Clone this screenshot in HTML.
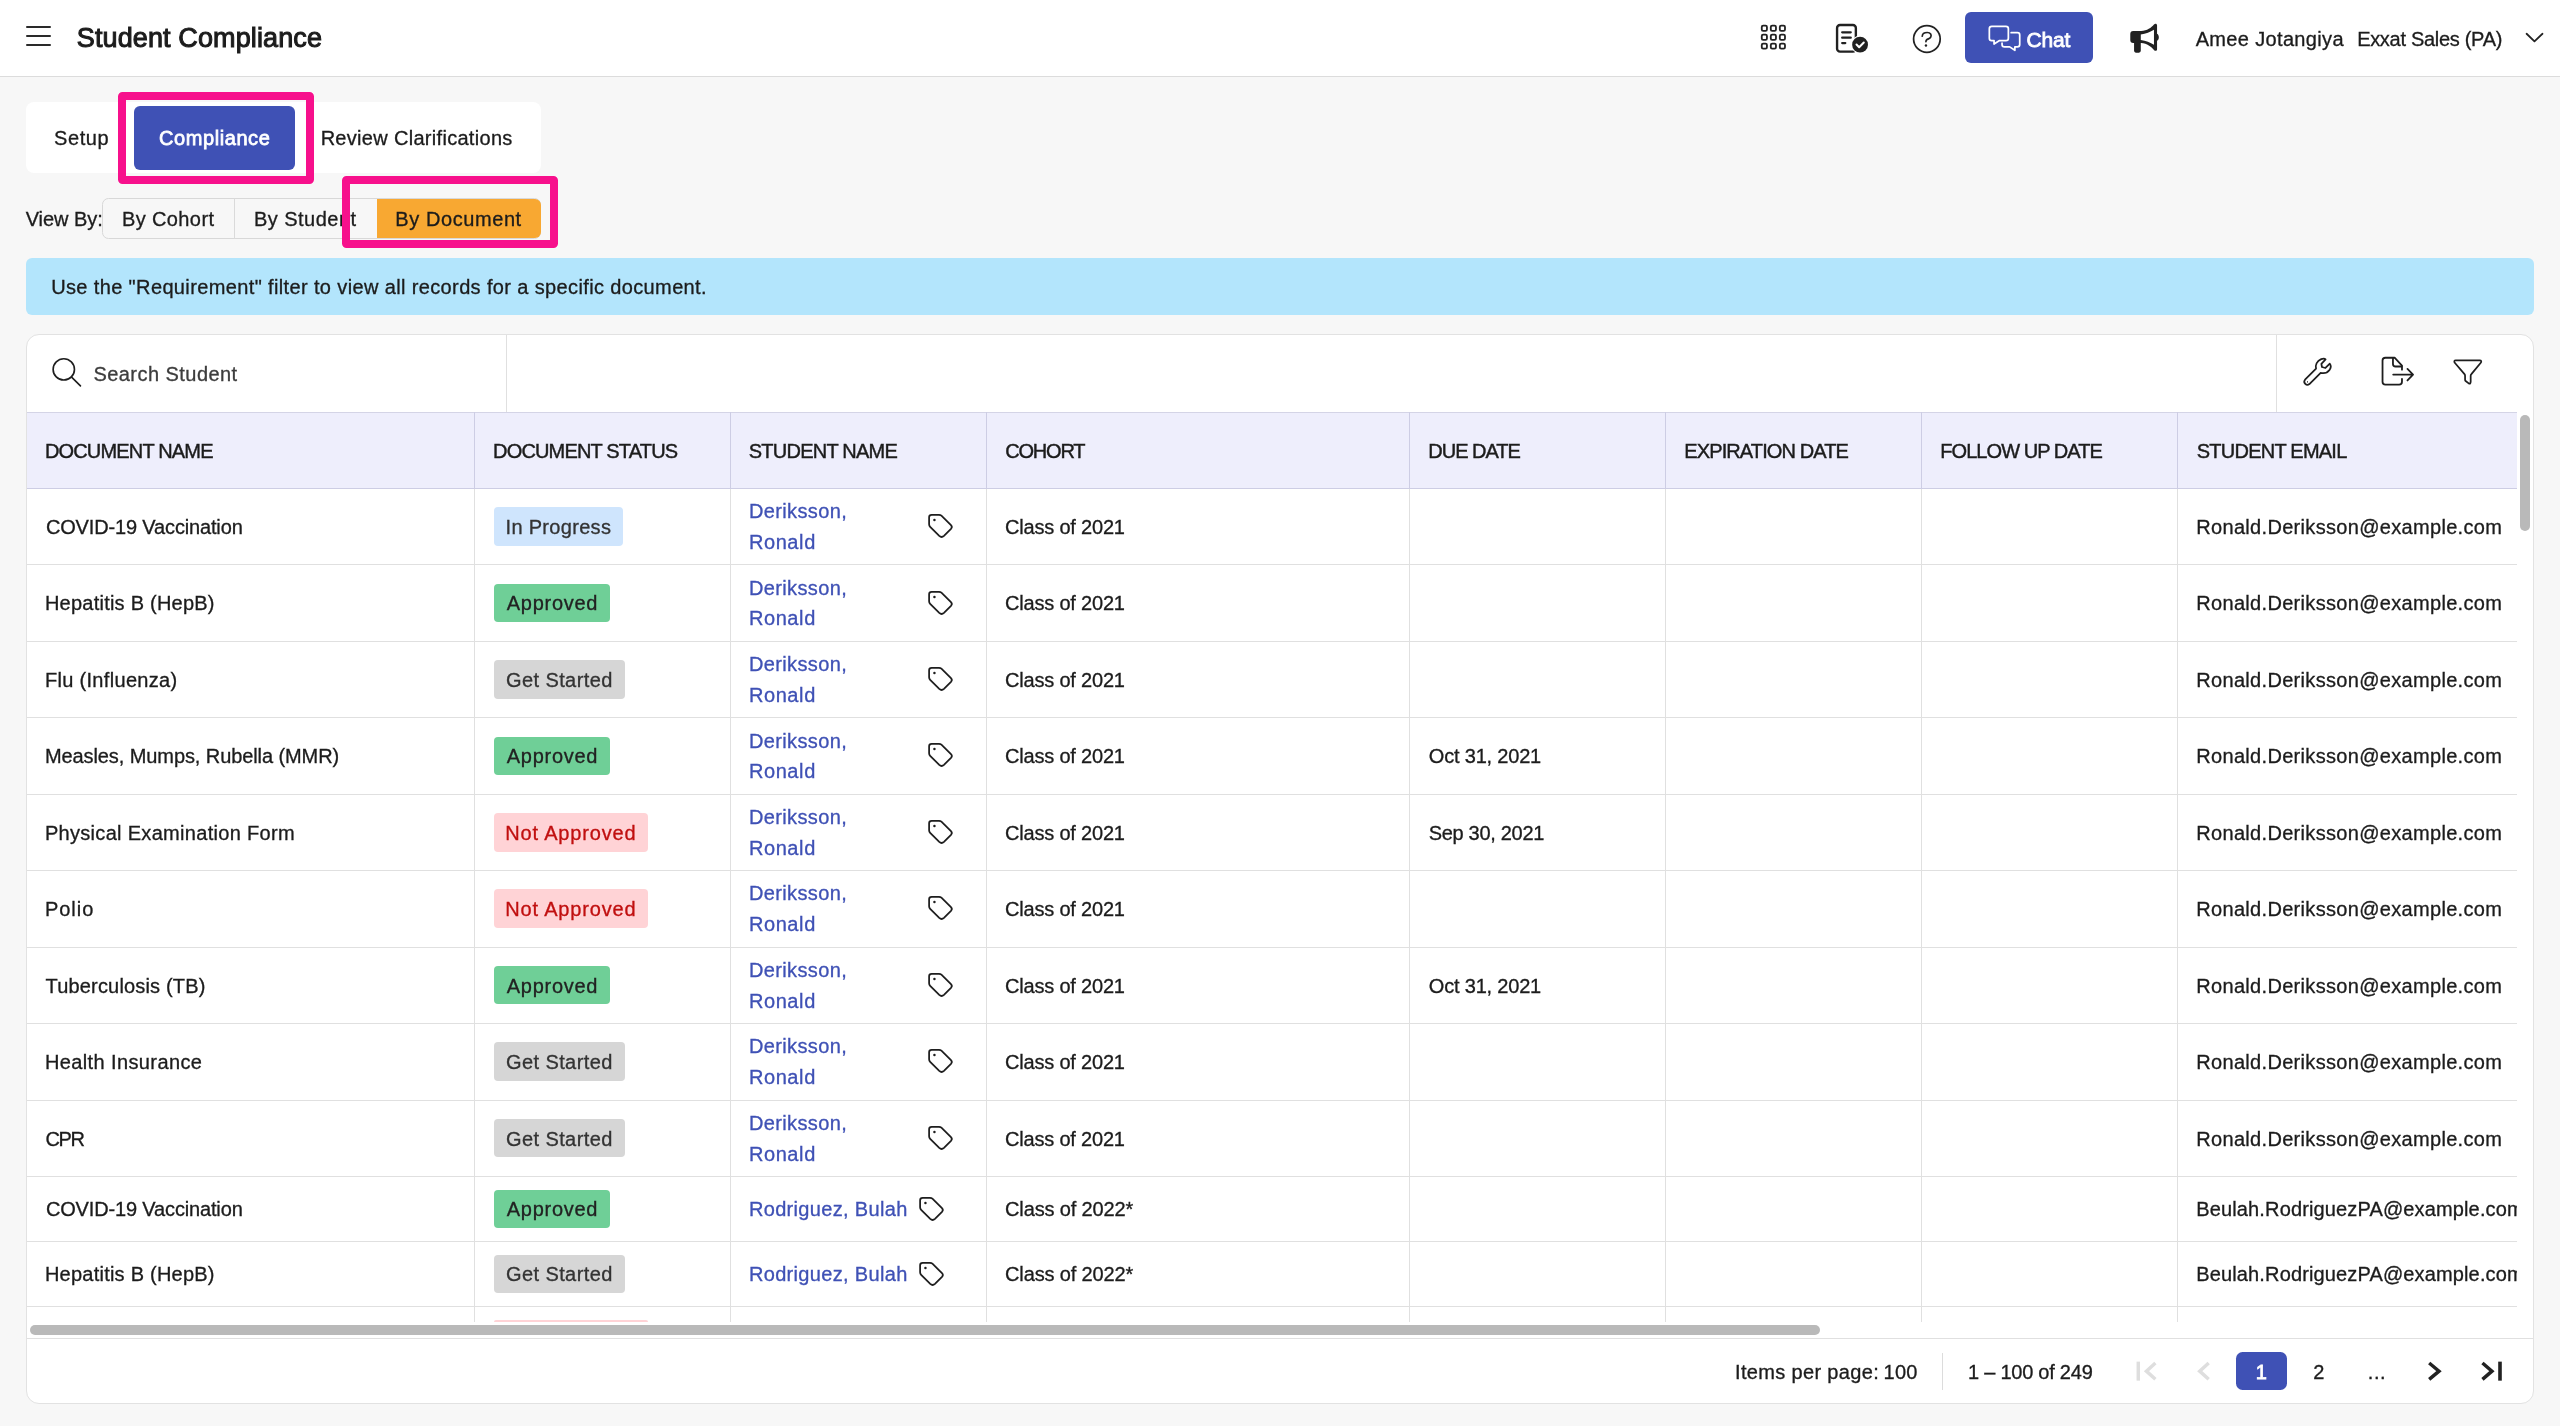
<!DOCTYPE html>
<html lang="en">
<head>
<meta charset="utf-8">
<title>Student Compliance</title>
<style>
html,body{margin:0;padding:0}
body{width:2560px;height:1426px;position:relative;overflow:hidden;background:#f7f7f7;font-family:"Liberation Sans",sans-serif;color:#212121}
.a{position:absolute;box-sizing:border-box}
.t{position:absolute;white-space:nowrap;line-height:1;display:block}
svg{position:absolute;overflow:visible}
.tag{fill:none;stroke:#1e1e1e}
.vl{position:absolute;width:1px;background:#e0e0e0;top:489px;height:833px}
.vh{position:absolute;width:1px;background:#cdcde4;top:412px;height:77px}
.hl{position:absolute;height:1px;background:#e0e0e0;left:27px;width:2490px}
</style>
</head>
<body>

<!-- ===== top header ===== -->
<div class="a" style="left:0;top:0;width:2560px;height:77px;background:#fff;border-bottom:1px solid #dcdcdc"></div>
<div class="a" style="left:26px;top:25.8px;width:24.6px;height:1.9px;background:#2a2a2a;border-radius:1px"></div>
<div class="a" style="left:26px;top:35.4px;width:24.6px;height:1.9px;background:#2a2a2a;border-radius:1px"></div>
<div class="a" style="left:26px;top:44.1px;width:24.6px;height:1.9px;background:#2a2a2a;border-radius:1px"></div>

<!-- grid / doc-check / help icons -->
<svg style="left:1750px;top:10px" width="210" height="60" viewBox="0 0 2560 731" fill="none" stroke="#222">
 <g stroke-width="22">
  <rect x="143.500" y="190.500" width="63" height="63" rx="17"/><rect x="253.500" y="190.500" width="63" height="63" rx="17"/><rect x="363.500" y="190.500" width="63" height="63" rx="17"/>
  <rect x="143.500" y="300.500" width="63" height="63" rx="17"/><rect x="253.500" y="300.500" width="63" height="63" rx="17"/><rect x="363.500" y="300.500" width="63" height="63" rx="17"/>
  <rect x="143.500" y="408.500" width="63" height="63" rx="17"/><rect x="253.500" y="408.500" width="63" height="63" rx="17"/><rect x="363.500" y="408.500" width="63" height="63" rx="17"/>
 </g>
</svg>

<!-- doc-check -->
<svg style="left:1830px;top:18px" width="44" height="40" viewBox="0 0 1569 1426" fill="none" stroke="#212121">
 <rect x="252" y="248" width="670" height="950" rx="105" stroke-width="85"/>
 <path d="M435 512H740M435 700H740M435 893H545" stroke-width="82" stroke-linecap="round"/>
 <circle cx="1072" cy="950" r="325" fill="#fff" stroke="none"/>
 <circle cx="1072" cy="950" r="282" fill="#212121" stroke="none"/>
 <path d="M945 945L1040 1040L1205 872" stroke="#fff" stroke-width="72" stroke-linecap="round" stroke-linejoin="round"/>
</svg>
<!-- help -->
<svg style="left:1906px;top:18px" width="44" height="40" viewBox="0 0 1569 1426" fill="none" stroke="#222" stroke-linecap="round">
 <circle cx="745" cy="748" r="474" stroke-width="62"/>
 <path d="M580 648C585 545 660 518 760 518C880 518 915 600 885 670C860 725 790 745 740 775C715 795 712 815 710 842" stroke-width="60"/>
 <circle cx="712" cy="980" r="43" fill="#222" stroke="none"/>
</svg>
<!-- chat button -->
<div class="a" style="left:1965px;top:11.8px;width:128px;height:51.3px;background:#3f51b5;border-radius:6px"></div>
<!-- chat bubbles -->
<svg style="left:1982px;top:18px" width="44" height="40" viewBox="0 0 1569 1426" fill="none" stroke="#fff" stroke-width="62" stroke-linejoin="round" stroke-linecap="round">
 <path d="M347 300H855Q940 300 940 385V720Q940 805 855 805H625L430 930V805H347Q262 805 262 720V385Q262 300 347 300Z"/>
 <path d="M1040 525H1262Q1345 525 1345 608V947Q1345 1030 1262 1030H1172V1152L985 1030H800Q715 1030 715 945V900"/>
</svg>
<!-- megaphone -->
<svg style="left:2122px;top:18px" width="44" height="40" viewBox="0 0 1569 1426">
 <path fill="#212121" fill-rule="evenodd" d="M400 465L680 465C900 455 1040 350 1140 235C1180 185 1250 200 1250 260L1250 560C1335 600 1335 780 1250 815L1250 1115C1250 1175 1180 1190 1140 1140C1040 1025 900 910 680 895L670 895L670 1170Q670 1235 605 1235L495 1235Q430 1235 430 1170L430 890L400 890Q295 890 295 785L295 570Q295 465 400 465ZM670 585C850 570 1010 500 1140 420L1140 955C1010 875 850 805 670 785Z"/>
</svg>
<!-- chevron down -->
<svg style="left:2180px;top:10px" width="380" height="60" viewBox="0 0 2560 404"><path d="M2335 160L2388 211L2442 160" fill="none" stroke="#222" stroke-width="12" stroke-linecap="round" stroke-linejoin="round"/></svg>

<!-- ===== tabs ===== -->
<div class="a" style="left:26px;top:101.9px;width:514.6px;height:71px;background:#fff;border-radius:8px"></div>
<div class="a" style="left:133.9px;top:106.1px;width:161.2px;height:64px;background:#3f51b5;border-radius:6px"></div>
<div class="a" style="left:118px;top:91.9px;width:196px;height:92.2px;border:8px solid #f7108c;border-radius:4.5px"></div>

<!-- ===== view by ===== -->
<div class="a" style="left:101.6px;top:198px;width:439.4px;height:40.5px;border:1px solid #d8d8d8;border-radius:6.5px"></div>
<div class="a" style="left:234px;top:198px;width:1px;height:40.5px;background:#dadada"></div>
<div class="a" style="left:377px;top:199px;width:164px;height:39px;background:#f8a832;border-radius:0 6px 6px 0"></div>

<!-- ===== banner ===== -->
<div class="a" style="left:26px;top:258px;width:2508px;height:56.7px;background:#b3e5fc;border-radius:6px"></div>

<!-- ===== card ===== -->
<div class="a" style="left:26px;top:334px;width:2508px;height:1069.5px;background:#fff;border:1px solid #e2e2e2;border-radius:13px"></div>
<div class="a" style="left:506px;top:335px;width:1px;height:77px;background:#e0e0e0"></div>
<div class="a" style="left:2276px;top:335px;width:1px;height:77px;background:#e0e0e0"></div>
<!-- search icon -->
<svg style="left:40px;top:345px" width="210" height="55" viewBox="0 0 2560 670" fill="none" stroke="#1e1e1e" stroke-width="20"><circle cx="290" cy="297" r="130"/><path d="M385 392L493 499" stroke-linecap="round"/></svg>
<!-- toolbar icons -->
<svg style="left:2290px;top:345px" width="210" height="55" viewBox="0 0 2560 670" fill="none" stroke="#1e1e1e" stroke-width="22" stroke-linejoin="round" stroke-linecap="round">
 <path d="M1365 300V250L1275 155H1163Q1128 155 1128 190V447Q1128 482 1163 482H1330Q1365 482 1365 447V412"/>
 <path d="M1255 160V232Q1255 262 1287 262H1360"/>
 <path d="M1258 360H1498M1432 292L1500 360L1432 432"/>
</svg>

<!-- wrench -->
<svg style="left:2296px;top:352px" width="44" height="40" viewBox="0 0 1569 1426" fill="none" stroke="#1e1e1e" stroke-width="63" stroke-linejoin="round" stroke-linecap="round">
 <path d="M715 590C690 480 730 330 900 255C960 230 1020 228 1055 262L905 420L925 535L1050 570L1205 418C1290 520 1200 800 880 745L478 1143A111 111 0 0 1 322 987Z"/>
 <ellipse cx="410" cy="1065" rx="17" ry="30" fill="#1e1e1e" stroke="none"/>
</svg>
<!-- filter -->
<svg style="left:2446px;top:352px" width="44" height="40" viewBox="0 0 1569 1426" fill="none" stroke="#1e1e1e" stroke-width="62" stroke-linejoin="round">
 <path d="M350 295L1200 295Q1290 300 1240 385L905 790Q880 815 880 850L880 1065Q880 1150 810 1120L700 1035Q680 1020 680 990L680 850Q680 815 660 790L312 385Q265 300 350 295Z"/>
</svg>
<!-- table header -->
<div class="a" style="left:27px;top:412px;width:2490px;height:77px;background:#eeeefc;border-top:1px solid #d4d4e6;border-bottom:1px solid #cdcde4"></div>
<div class="vh" style="left:474px"></div><div class="vh" style="left:730px"></div><div class="vh" style="left:986px"></div><div class="vh" style="left:1409px"></div><div class="vh" style="left:1665px"></div><div class="vh" style="left:1921px"></div><div class="vh" style="left:2177px"></div>
<!-- body grid lines -->
<div class="vl" style="left:474px"></div><div class="vl" style="left:730px"></div><div class="vl" style="left:986px"></div><div class="vl" style="left:1409px"></div><div class="vl" style="left:1665px"></div><div class="vl" style="left:1921px"></div><div class="vl" style="left:2177px"></div>
<div class="hl" style="top:564px"></div><div class="hl" style="top:641px"></div><div class="hl" style="top:717px"></div><div class="hl" style="top:794px"></div><div class="hl" style="top:870px"></div><div class="hl" style="top:947px"></div><div class="hl" style="top:1023px"></div><div class="hl" style="top:1100px"></div><div class="hl" style="top:1176px"></div><div class="hl" style="top:1241px"></div><div class="hl" style="top:1306px"></div>
<!-- partial last row badge -->
<div class="a" style="left:494px;top:1320px;width:153.7px;height:2px;background:#ffd3d6;border-radius:4px 4px 0 0"></div>

<div class="a" style="left:2236.2px;top:1352px;width:50.8px;height:37.8px;background:#3f51b5;border-radius:6.5px"></div>
<div style="position:absolute;left:494px;top:507.08px;width:129.2px;height:38.6px;background:#cfe5fd;border-radius:4px"></div>
<svg class="tag" style="left:900px;top:500.03px" width="100" height="50" viewBox="0 0 2560 1280"><path d="M745 440Q745 378 810 378L1000 378Q1035 378 1060 402L1305 645Q1350 690 1305 738L1125 918Q1065 975 1005 918L772 685Q745 658 745 620Z" stroke-width="45" stroke-linejoin="round"/><circle cx="882" cy="510" r="32" fill="#1e1e1e" stroke="none"/></svg>
<div style="position:absolute;left:494px;top:583.55px;width:116px;height:38.6px;background:#6fcf97;border-radius:4px"></div>
<svg class="tag" style="left:900px;top:576.50px" width="100" height="50" viewBox="0 0 2560 1280"><path d="M745 440Q745 378 810 378L1000 378Q1035 378 1060 402L1305 645Q1350 690 1305 738L1125 918Q1065 975 1005 918L772 685Q745 658 745 620Z" stroke-width="45" stroke-linejoin="round"/><circle cx="882" cy="510" r="32" fill="#1e1e1e" stroke="none"/></svg>
<div style="position:absolute;left:494px;top:660.02px;width:131px;height:38.6px;background:#d6d6d6;border-radius:4px"></div>
<svg class="tag" style="left:900px;top:652.98px" width="100" height="50" viewBox="0 0 2560 1280"><path d="M745 440Q745 378 810 378L1000 378Q1035 378 1060 402L1305 645Q1350 690 1305 738L1125 918Q1065 975 1005 918L772 685Q745 658 745 620Z" stroke-width="45" stroke-linejoin="round"/><circle cx="882" cy="510" r="32" fill="#1e1e1e" stroke="none"/></svg>
<div style="position:absolute;left:494px;top:736.50px;width:116px;height:38.6px;background:#6fcf97;border-radius:4px"></div>
<svg class="tag" style="left:900px;top:729.45px" width="100" height="50" viewBox="0 0 2560 1280"><path d="M745 440Q745 378 810 378L1000 378Q1035 378 1060 402L1305 645Q1350 690 1305 738L1125 918Q1065 975 1005 918L772 685Q745 658 745 620Z" stroke-width="45" stroke-linejoin="round"/><circle cx="882" cy="510" r="32" fill="#1e1e1e" stroke="none"/></svg>
<div style="position:absolute;left:494px;top:812.96px;width:153.7px;height:38.6px;background:#ffd3d6;border-radius:4px"></div>
<svg class="tag" style="left:900px;top:805.91px" width="100" height="50" viewBox="0 0 2560 1280"><path d="M745 440Q745 378 810 378L1000 378Q1035 378 1060 402L1305 645Q1350 690 1305 738L1125 918Q1065 975 1005 918L772 685Q745 658 745 620Z" stroke-width="45" stroke-linejoin="round"/><circle cx="882" cy="510" r="32" fill="#1e1e1e" stroke="none"/></svg>
<div style="position:absolute;left:494px;top:889.43px;width:153.7px;height:38.6px;background:#ffd3d6;border-radius:4px"></div>
<svg class="tag" style="left:900px;top:882.38px" width="100" height="50" viewBox="0 0 2560 1280"><path d="M745 440Q745 378 810 378L1000 378Q1035 378 1060 402L1305 645Q1350 690 1305 738L1125 918Q1065 975 1005 918L772 685Q745 658 745 620Z" stroke-width="45" stroke-linejoin="round"/><circle cx="882" cy="510" r="32" fill="#1e1e1e" stroke="none"/></svg>
<div style="position:absolute;left:494px;top:965.90px;width:116px;height:38.6px;background:#6fcf97;border-radius:4px"></div>
<svg class="tag" style="left:900px;top:958.86px" width="100" height="50" viewBox="0 0 2560 1280"><path d="M745 440Q745 378 810 378L1000 378Q1035 378 1060 402L1305 645Q1350 690 1305 738L1125 918Q1065 975 1005 918L772 685Q745 658 745 620Z" stroke-width="45" stroke-linejoin="round"/><circle cx="882" cy="510" r="32" fill="#1e1e1e" stroke="none"/></svg>
<div style="position:absolute;left:494px;top:1042.38px;width:131px;height:38.6px;background:#d6d6d6;border-radius:4px"></div>
<svg class="tag" style="left:900px;top:1035.32px" width="100" height="50" viewBox="0 0 2560 1280"><path d="M745 440Q745 378 810 378L1000 378Q1035 378 1060 402L1305 645Q1350 690 1305 738L1125 918Q1065 975 1005 918L772 685Q745 658 745 620Z" stroke-width="45" stroke-linejoin="round"/><circle cx="882" cy="510" r="32" fill="#1e1e1e" stroke="none"/></svg>
<div style="position:absolute;left:494px;top:1118.85px;width:131px;height:38.6px;background:#d6d6d6;border-radius:4px"></div>
<svg class="tag" style="left:900px;top:1111.80px" width="100" height="50" viewBox="0 0 2560 1280"><path d="M745 440Q745 378 810 378L1000 378Q1035 378 1060 402L1305 645Q1350 690 1305 738L1125 918Q1065 975 1005 918L772 685Q745 658 745 620Z" stroke-width="45" stroke-linejoin="round"/><circle cx="882" cy="510" r="32" fill="#1e1e1e" stroke="none"/></svg>
<div style="position:absolute;left:494px;top:1189.62px;width:116px;height:38.6px;background:#6fcf97;border-radius:4px"></div>
<svg class="tag" style="left:890.7px;top:1182.77px" width="100" height="50" viewBox="0 0 2560 1280"><path d="M745 440Q745 378 810 378L1000 378Q1035 378 1060 402L1305 645Q1350 690 1305 738L1125 918Q1065 975 1005 918L772 685Q745 658 745 620Z" stroke-width="45" stroke-linejoin="round"/><circle cx="882" cy="510" r="32" fill="#1e1e1e" stroke="none"/></svg>
<div style="position:absolute;left:494px;top:1254.65px;width:131px;height:38.6px;background:#d6d6d6;border-radius:4px"></div>
<svg class="tag" style="left:890.7px;top:1247.80px" width="100" height="50" viewBox="0 0 2560 1280"><path d="M745 440Q745 378 810 378L1000 378Q1035 378 1060 402L1305 645Q1350 690 1305 738L1125 918Q1065 975 1005 918L772 685Q745 658 745 620Z" stroke-width="45" stroke-linejoin="round"/><circle cx="882" cy="510" r="32" fill="#1e1e1e" stroke="none"/></svg>
<div style="position:absolute;left:0;top:0;width:2560px;height:1426px;will-change:transform">
<span class="t" style="font-size:27px;color:#1c1c1c;-webkit-text-stroke:1.03px #1c1c1c;letter-spacing:0.115px;left:76.87px;top:24.64px;">Student Compliance</span>
<span class="t" style="font-size:21px;color:#fff;-webkit-text-stroke:0.80px #fff;letter-spacing:-0.170px;left:2026.52px;top:29.22px;">Chat</span>
<span class="t" style="font-size:20px;color:#1c1c1c;-webkit-text-stroke:0.32px #1c1c1c;letter-spacing:0.344px;left:2195.65px;top:29.17px;">Amee Jotangiya</span>
<span class="t" style="font-size:20px;color:#1c1c1c;-webkit-text-stroke:0.32px #1c1c1c;letter-spacing:-0.296px;left:2357.14px;top:29.17px;">Exxat Sales (PA)</span>
<span class="t" style="font-size:20px;color:#1c1c1c;-webkit-text-stroke:0.32px #1c1c1c;letter-spacing:0.570px;left:54.05px;top:128.37px;">Setup</span>
<span class="t" style="font-size:20px;color:#fff;-webkit-text-stroke:0.76px #fff;letter-spacing:0.582px;left:158.96px;top:128.37px;">Compliance</span>
<span class="t" style="font-size:20px;color:#1c1c1c;-webkit-text-stroke:0.32px #1c1c1c;letter-spacing:0.305px;left:320.64px;top:128.37px;">Review Clarifications</span>
<span class="t" style="font-size:20px;color:#1c1c1c;-webkit-text-stroke:0.32px #1c1c1c;letter-spacing:-0.053px;left:25.65px;top:208.67px;">View By:</span>
<span class="t" style="font-size:20px;color:#1c1c1c;-webkit-text-stroke:0.32px #1c1c1c;letter-spacing:0.398px;left:121.90px;top:208.67px;">By Cohort</span>
<span class="t" style="font-size:20px;color:#1c1c1c;-webkit-text-stroke:0.32px #1c1c1c;letter-spacing:0.479px;left:253.90px;top:208.67px;">By Student</span>
<span class="t" style="font-size:20px;color:#1c1c1c;-webkit-text-stroke:0.32px #1c1c1c;letter-spacing:0.581px;left:395.31px;top:208.67px;">By Document</span>
<span class="t" style="font-size:20px;color:#1c1c1c;-webkit-text-stroke:0.32px #1c1c1c;letter-spacing:0.368px;left:51.20px;top:276.82px;">Use the "Requirement" filter to view all records for a specific document.</span>
<span class="t" style="font-size:20px;color:#3d3d3d;-webkit-text-stroke:0.32px #3d3d3d;letter-spacing:0.450px;left:93.45px;top:363.77px;">Search Student</span>
<span class="t" style="font-size:20px;color:#1c1c1c;-webkit-text-stroke:0.44px #1c1c1c;letter-spacing:-0.827px;left:44.88px;top:440.57px;">DOCUMENT NAME</span>
<span class="t" style="font-size:20px;color:#1c1c1c;-webkit-text-stroke:0.44px #1c1c1c;letter-spacing:-0.830px;left:493.06px;top:440.57px;">DOCUMENT STATUS</span>
<span class="t" style="font-size:20px;color:#1c1c1c;-webkit-text-stroke:0.44px #1c1c1c;letter-spacing:-0.762px;left:748.78px;top:440.57px;">STUDENT NAME</span>
<span class="t" style="font-size:20px;color:#1c1c1c;-webkit-text-stroke:0.44px #1c1c1c;letter-spacing:-1.243px;left:1005.36px;top:440.57px;">COHORT</span>
<span class="t" style="font-size:20px;color:#1c1c1c;-webkit-text-stroke:0.44px #1c1c1c;letter-spacing:-1.021px;left:1428.33px;top:440.57px;">DUE DATE</span>
<span class="t" style="font-size:20px;color:#1c1c1c;-webkit-text-stroke:0.44px #1c1c1c;letter-spacing:-0.898px;left:1684.33px;top:440.57px;">EXPIRATION DATE</span>
<span class="t" style="font-size:20px;color:#1c1c1c;-webkit-text-stroke:0.44px #1c1c1c;letter-spacing:-0.950px;left:1940.33px;top:440.57px;">FOLLOW UP DATE</span>
<span class="t" style="font-size:20px;color:#1c1c1c;-webkit-text-stroke:0.44px #1c1c1c;letter-spacing:-0.762px;left:2196.78px;top:440.57px;">STUDENT EMAIL</span>
<span class="t" style="font-size:20px;color:#1c1c1c;-webkit-text-stroke:0.32px #1c1c1c;letter-spacing:-0.151px;left:45.91px;top:516.80px;">COVID-19 Vaccination</span>
<span class="t" style="font-size:20px;color:#333;-webkit-text-stroke:0.32px #333;letter-spacing:0.310px;left:505.52px;top:516.80px;">In Progress</span>
<span class="t" style="font-size:20px;color:#3f51b5;-webkit-text-stroke:0.32px #3f51b5;letter-spacing:0.371px;left:748.90px;top:501.10px;">Deriksson,</span>
<span class="t" style="font-size:20px;color:#3f51b5;-webkit-text-stroke:0.32px #3f51b5;letter-spacing:0.598px;left:748.90px;top:531.80px;">Ronald</span>
<span class="t" style="font-size:20px;color:#1c1c1c;-webkit-text-stroke:0.32px #1c1c1c;letter-spacing:-0.196px;left:1005.06px;top:516.80px;">Class of 2021</span>
<span class="t" style="font-size:20px;color:#1c1c1c;-webkit-text-stroke:0.32px #1c1c1c;letter-spacing:0.315px;left:2196.29px;top:516.80px;">Ronald.Deriksson@example.com</span>
<span class="t" style="font-size:20px;color:#1c1c1c;-webkit-text-stroke:0.32px #1c1c1c;letter-spacing:0.237px;left:44.90px;top:593.27px;">Hepatitis B (HepB)</span>
<span class="t" style="font-size:20px;color:#222;-webkit-text-stroke:0.32px #222;letter-spacing:0.733px;left:506.71px;top:593.27px;">Approved</span>
<span class="t" style="font-size:20px;color:#3f51b5;-webkit-text-stroke:0.32px #3f51b5;letter-spacing:0.371px;left:748.90px;top:577.58px;">Deriksson,</span>
<span class="t" style="font-size:20px;color:#3f51b5;-webkit-text-stroke:0.32px #3f51b5;letter-spacing:0.598px;left:748.90px;top:608.27px;">Ronald</span>
<span class="t" style="font-size:20px;color:#1c1c1c;-webkit-text-stroke:0.32px #1c1c1c;letter-spacing:-0.196px;left:1005.06px;top:593.27px;">Class of 2021</span>
<span class="t" style="font-size:20px;color:#1c1c1c;-webkit-text-stroke:0.32px #1c1c1c;letter-spacing:0.315px;left:2196.29px;top:593.27px;">Ronald.Deriksson@example.com</span>
<span class="t" style="font-size:20px;color:#1c1c1c;-webkit-text-stroke:0.32px #1c1c1c;letter-spacing:0.320px;left:44.90px;top:669.75px;">Flu (Influenza)</span>
<span class="t" style="font-size:20px;color:#333;-webkit-text-stroke:0.32px #333;letter-spacing:0.391px;left:506.09px;top:669.75px;">Get Started</span>
<span class="t" style="font-size:20px;color:#3f51b5;-webkit-text-stroke:0.32px #3f51b5;letter-spacing:0.371px;left:748.90px;top:654.05px;">Deriksson,</span>
<span class="t" style="font-size:20px;color:#3f51b5;-webkit-text-stroke:0.32px #3f51b5;letter-spacing:0.598px;left:748.90px;top:684.75px;">Ronald</span>
<span class="t" style="font-size:20px;color:#1c1c1c;-webkit-text-stroke:0.32px #1c1c1c;letter-spacing:-0.196px;left:1005.06px;top:669.75px;">Class of 2021</span>
<span class="t" style="font-size:20px;color:#1c1c1c;-webkit-text-stroke:0.32px #1c1c1c;letter-spacing:0.315px;left:2196.29px;top:669.75px;">Ronald.Deriksson@example.com</span>
<span class="t" style="font-size:20px;color:#1c1c1c;-webkit-text-stroke:0.32px #1c1c1c;letter-spacing:-0.086px;left:44.90px;top:746.22px;">Measles, Mumps, Rubella (MMR)</span>
<span class="t" style="font-size:20px;color:#222;-webkit-text-stroke:0.32px #222;letter-spacing:0.733px;left:506.71px;top:746.22px;">Approved</span>
<span class="t" style="font-size:20px;color:#3f51b5;-webkit-text-stroke:0.32px #3f51b5;letter-spacing:0.371px;left:748.90px;top:730.52px;">Deriksson,</span>
<span class="t" style="font-size:20px;color:#3f51b5;-webkit-text-stroke:0.32px #3f51b5;letter-spacing:0.598px;left:748.90px;top:761.22px;">Ronald</span>
<span class="t" style="font-size:20px;color:#1c1c1c;-webkit-text-stroke:0.32px #1c1c1c;letter-spacing:-0.196px;left:1005.06px;top:746.22px;">Class of 2021</span>
<span class="t" style="font-size:20px;color:#1c1c1c;-webkit-text-stroke:0.32px #1c1c1c;letter-spacing:-0.186px;left:1428.77px;top:746.22px;">Oct 31, 2021</span>
<span class="t" style="font-size:20px;color:#1c1c1c;-webkit-text-stroke:0.32px #1c1c1c;letter-spacing:0.315px;left:2196.29px;top:746.22px;">Ronald.Deriksson@example.com</span>
<span class="t" style="font-size:20px;color:#1c1c1c;-webkit-text-stroke:0.32px #1c1c1c;letter-spacing:0.309px;left:44.90px;top:822.68px;">Physical Examination Form</span>
<span class="t" style="font-size:20px;color:#c00f0f;-webkit-text-stroke:0.32px #c00f0f;letter-spacing:0.824px;left:505.29px;top:822.68px;">Not Approved</span>
<span class="t" style="font-size:20px;color:#3f51b5;-webkit-text-stroke:0.32px #3f51b5;letter-spacing:0.371px;left:748.90px;top:806.99px;">Deriksson,</span>
<span class="t" style="font-size:20px;color:#3f51b5;-webkit-text-stroke:0.32px #3f51b5;letter-spacing:0.598px;left:748.90px;top:837.68px;">Ronald</span>
<span class="t" style="font-size:20px;color:#1c1c1c;-webkit-text-stroke:0.32px #1c1c1c;letter-spacing:-0.196px;left:1005.06px;top:822.68px;">Class of 2021</span>
<span class="t" style="font-size:20px;color:#1c1c1c;-webkit-text-stroke:0.32px #1c1c1c;letter-spacing:-0.296px;left:1428.67px;top:822.68px;">Sep 30, 2021</span>
<span class="t" style="font-size:20px;color:#1c1c1c;-webkit-text-stroke:0.32px #1c1c1c;letter-spacing:0.315px;left:2196.29px;top:822.68px;">Ronald.Deriksson@example.com</span>
<span class="t" style="font-size:20px;color:#1c1c1c;-webkit-text-stroke:0.32px #1c1c1c;letter-spacing:0.973px;left:44.90px;top:899.15px;">Polio</span>
<span class="t" style="font-size:20px;color:#c00f0f;-webkit-text-stroke:0.32px #c00f0f;letter-spacing:0.824px;left:505.29px;top:899.15px;">Not Approved</span>
<span class="t" style="font-size:20px;color:#3f51b5;-webkit-text-stroke:0.32px #3f51b5;letter-spacing:0.371px;left:748.90px;top:883.46px;">Deriksson,</span>
<span class="t" style="font-size:20px;color:#3f51b5;-webkit-text-stroke:0.32px #3f51b5;letter-spacing:0.598px;left:748.90px;top:914.15px;">Ronald</span>
<span class="t" style="font-size:20px;color:#1c1c1c;-webkit-text-stroke:0.32px #1c1c1c;letter-spacing:-0.196px;left:1005.06px;top:899.15px;">Class of 2021</span>
<span class="t" style="font-size:20px;color:#1c1c1c;-webkit-text-stroke:0.32px #1c1c1c;letter-spacing:0.315px;left:2196.29px;top:899.15px;">Ronald.Deriksson@example.com</span>
<span class="t" style="font-size:20px;color:#1c1c1c;-webkit-text-stroke:0.32px #1c1c1c;letter-spacing:0.172px;left:45.56px;top:975.62px;">Tuberculosis (TB)</span>
<span class="t" style="font-size:20px;color:#222;-webkit-text-stroke:0.32px #222;letter-spacing:0.733px;left:506.71px;top:975.62px;">Approved</span>
<span class="t" style="font-size:20px;color:#3f51b5;-webkit-text-stroke:0.32px #3f51b5;letter-spacing:0.371px;left:748.90px;top:959.93px;">Deriksson,</span>
<span class="t" style="font-size:20px;color:#3f51b5;-webkit-text-stroke:0.32px #3f51b5;letter-spacing:0.598px;left:748.90px;top:990.62px;">Ronald</span>
<span class="t" style="font-size:20px;color:#1c1c1c;-webkit-text-stroke:0.32px #1c1c1c;letter-spacing:-0.196px;left:1005.06px;top:975.62px;">Class of 2021</span>
<span class="t" style="font-size:20px;color:#1c1c1c;-webkit-text-stroke:0.32px #1c1c1c;letter-spacing:-0.186px;left:1428.77px;top:975.62px;">Oct 31, 2021</span>
<span class="t" style="font-size:20px;color:#1c1c1c;-webkit-text-stroke:0.32px #1c1c1c;letter-spacing:0.315px;left:2196.29px;top:975.62px;">Ronald.Deriksson@example.com</span>
<span class="t" style="font-size:20px;color:#1c1c1c;-webkit-text-stroke:0.32px #1c1c1c;letter-spacing:0.392px;left:44.90px;top:1052.09px;">Health Insurance</span>
<span class="t" style="font-size:20px;color:#333;-webkit-text-stroke:0.32px #333;letter-spacing:0.391px;left:506.09px;top:1052.09px;">Get Started</span>
<span class="t" style="font-size:20px;color:#3f51b5;-webkit-text-stroke:0.32px #3f51b5;letter-spacing:0.371px;left:748.90px;top:1036.39px;">Deriksson,</span>
<span class="t" style="font-size:20px;color:#3f51b5;-webkit-text-stroke:0.32px #3f51b5;letter-spacing:0.598px;left:748.90px;top:1067.09px;">Ronald</span>
<span class="t" style="font-size:20px;color:#1c1c1c;-webkit-text-stroke:0.32px #1c1c1c;letter-spacing:-0.196px;left:1005.06px;top:1052.09px;">Class of 2021</span>
<span class="t" style="font-size:20px;color:#1c1c1c;-webkit-text-stroke:0.32px #1c1c1c;letter-spacing:0.315px;left:2196.29px;top:1052.09px;">Ronald.Deriksson@example.com</span>
<span class="t" style="font-size:20px;color:#1c1c1c;-webkit-text-stroke:0.32px #1c1c1c;letter-spacing:-1.455px;left:45.58px;top:1128.57px;">CPR</span>
<span class="t" style="font-size:20px;color:#333;-webkit-text-stroke:0.32px #333;letter-spacing:0.391px;left:506.09px;top:1128.57px;">Get Started</span>
<span class="t" style="font-size:20px;color:#3f51b5;-webkit-text-stroke:0.32px #3f51b5;letter-spacing:0.371px;left:748.90px;top:1112.87px;">Deriksson,</span>
<span class="t" style="font-size:20px;color:#3f51b5;-webkit-text-stroke:0.32px #3f51b5;letter-spacing:0.598px;left:748.90px;top:1143.57px;">Ronald</span>
<span class="t" style="font-size:20px;color:#1c1c1c;-webkit-text-stroke:0.32px #1c1c1c;letter-spacing:-0.196px;left:1005.06px;top:1128.57px;">Class of 2021</span>
<span class="t" style="font-size:20px;color:#1c1c1c;-webkit-text-stroke:0.32px #1c1c1c;letter-spacing:0.315px;left:2196.29px;top:1128.57px;">Ronald.Deriksson@example.com</span>
<span class="t" style="font-size:20px;color:#1c1c1c;-webkit-text-stroke:0.32px #1c1c1c;letter-spacing:-0.151px;left:45.91px;top:1199.34px;">COVID-19 Vaccination</span>
<span class="t" style="font-size:20px;color:#222;-webkit-text-stroke:0.32px #222;letter-spacing:0.733px;left:506.71px;top:1199.34px;">Approved</span>
<span class="t" style="font-size:20px;color:#3f51b5;-webkit-text-stroke:0.32px #3f51b5;letter-spacing:0.334px;left:748.90px;top:1199.34px;">Rodriguez, Bulah</span>
<span class="t" style="font-size:20px;color:#1c1c1c;-webkit-text-stroke:0.32px #1c1c1c;letter-spacing:-0.143px;left:1005.06px;top:1199.34px;">Class of 2022*</span>
<span class="t" style="font-size:20px;color:#1c1c1c;-webkit-text-stroke:0.32px #1c1c1c;letter-spacing:0.135px;left:2196.29px;top:1199.34px;">Beulah.RodriguezPA@example.com</span>
<span class="t" style="font-size:20px;color:#1c1c1c;-webkit-text-stroke:0.32px #1c1c1c;letter-spacing:0.237px;left:44.90px;top:1264.37px;">Hepatitis B (HepB)</span>
<span class="t" style="font-size:20px;color:#333;-webkit-text-stroke:0.32px #333;letter-spacing:0.391px;left:506.09px;top:1264.37px;">Get Started</span>
<span class="t" style="font-size:20px;color:#3f51b5;-webkit-text-stroke:0.32px #3f51b5;letter-spacing:0.334px;left:748.90px;top:1264.37px;">Rodriguez, Bulah</span>
<span class="t" style="font-size:20px;color:#1c1c1c;-webkit-text-stroke:0.32px #1c1c1c;letter-spacing:-0.143px;left:1005.06px;top:1264.37px;">Class of 2022*</span>
<span class="t" style="font-size:20px;color:#1c1c1c;-webkit-text-stroke:0.32px #1c1c1c;letter-spacing:0.135px;left:2196.29px;top:1264.37px;">Beulah.RodriguezPA@example.com</span>
<span class="t" style="font-size:20px;color:#1c1c1c;-webkit-text-stroke:0.32px #1c1c1c;letter-spacing:0.340px;left:1735.00px;top:1362.47px;">Items per page:</span>
<span class="t" style="font-size:20px;color:#1c1c1c;-webkit-text-stroke:0.32px #1c1c1c;letter-spacing:0.361px;left:1883.41px;top:1362.47px;">100</span>
<span class="t" style="font-size:20px;color:#1c1c1c;-webkit-text-stroke:0.32px #1c1c1c;letter-spacing:-0.244px;left:1968.04px;top:1362.47px;">1 – 100 of 249</span>
<span class="t" style="font-size:20px;color:#fff;-webkit-text-stroke:0.76px #fff;letter-spacing:-1.485px;left:2255.63px;top:1362.47px;">1</span>
<span class="t" style="font-size:20px;color:#1c1c1c;-webkit-text-stroke:0.32px #1c1c1c;letter-spacing:1.455px;left:2313.18px;top:1362.47px;">2</span>
<span class="t" style="font-size:20px;color:#1c1c1c;-webkit-text-stroke:0.32px #1c1c1c;letter-spacing:0.530px;left:2367.80px;top:1362.47px;">...</span>
</div>

<!-- covers for clipped regions -->
<div class="a" style="left:2517px;top:412px;width:16px;height:926px;background:#fff"></div>
<div class="a" style="left:27px;top:1322px;width:2506px;height:16px;background:#fff"></div>
<!-- scrollbars -->
<div class="a" style="left:2520px;top:415px;width:10px;height:115.5px;background:#b9b9b9;border-radius:5px"></div>
<div class="a" style="left:30px;top:1325.3px;width:1790px;height:9.6px;background:#b9b9b9;border-radius:5px"></div>
<div class="a" style="left:27px;top:1338px;width:2506px;height:1px;background:#e0e0e0"></div>

<!-- pagination -->
<div class="a" style="left:1942px;top:1352.6px;width:1px;height:37px;background:#dcdcdc"></div>
<svg style="left:2120px;top:1340px" width="420" height="70" viewBox="0 0 2560 427" fill="none" stroke-width="21">
 <rect x="100" y="132" width="21" height="116" fill="#dedede"/>
 <path d="M215 140L160 190L215 240" stroke="#dedede"/>
 <path d="M540 140L485 190L540 240" stroke="#dedede"/>
 <path d="M1885 140L1945 190L1885 240" stroke="#222"/>
 <path d="M2210 140L2268 190L2210 240" stroke="#222"/>
 <rect x="2306" y="132" width="22" height="116" fill="#222"/>
</svg>

<!-- second highlight box (on top of view-by text) -->
<div class="a" style="left:342px;top:175.9px;width:216px;height:72.1px;border:8px solid #f7108c;border-radius:4.5px"></div>
</body>
</html>
